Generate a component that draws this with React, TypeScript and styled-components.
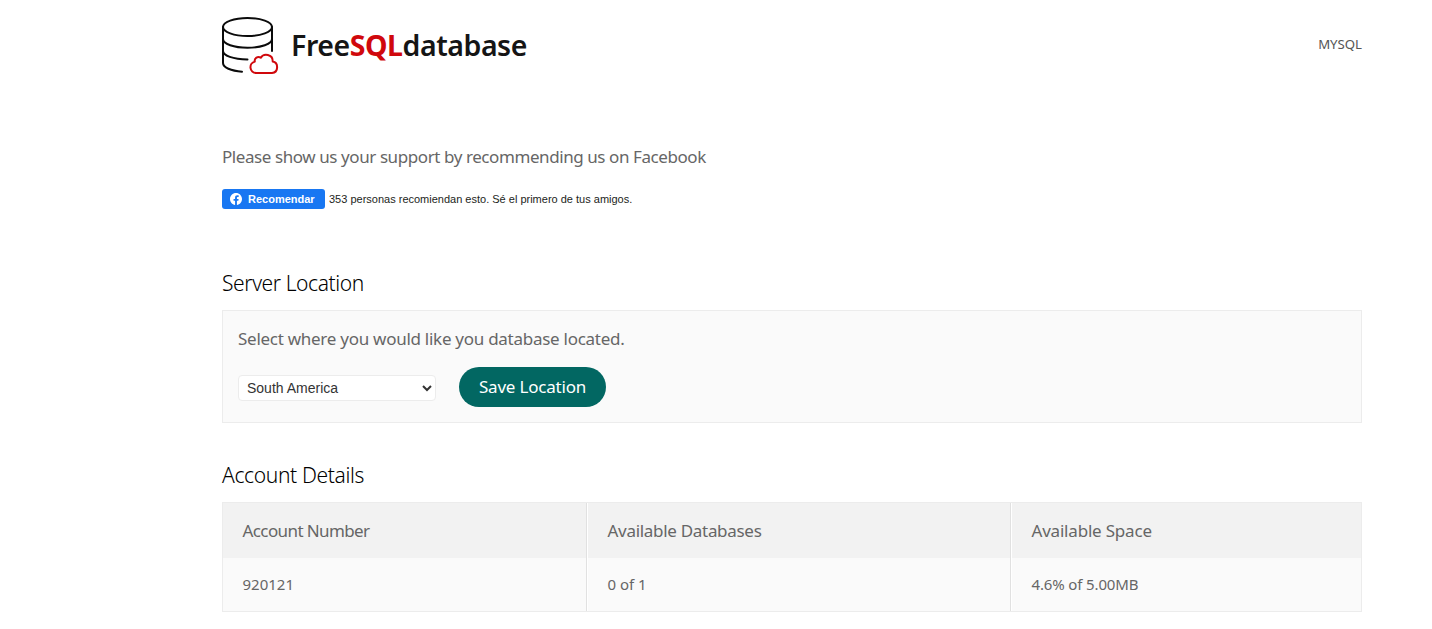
import React from 'react';
import styled, { createGlobalStyle } from 'styled-components';

const GlobalStyle = createGlobalStyle`
  * { box-sizing: border-box; }
  body {
    margin: 0;
    background: #fff;
    color: #666;
    font-family: 'Noto Sans', 'Open Sans', sans-serif;
    overflow: hidden;
  }
`;

const Page = styled.div`
  width: 1140px;
  margin-left: 222px;
`;

const Header = styled.header`
  display: flex;
  justify-content: space-between;
  align-items: center;
  height: 90px;
`;

const Brand = styled.div`
  display: flex;
  align-items: center;
  gap: 11px;
`;

const Wordmark = styled.span`
  color: #151515;
  font-size: 28.5px;
  font-weight: 600;
  line-height: 44px;
  letter-spacing: -0.45px;
  white-space: nowrap;
`;

const Accent = styled.span`
  color: #d0080c;
  font-weight: 700;
`;

const NavLink = styled.a`
  color: #555;
  font-size: 13.2px;
  line-height: 20px;
  margin-bottom: 2px;
  letter-spacing: 0;
  text-decoration: none;
  white-space: nowrap;
`;

const Lead = styled.p<{ $spacing: number }>`
  margin: 0;
  font-size: 17px;
  line-height: 28px;
  letter-spacing: ${(p) => p.$spacing}px;
  white-space: nowrap;
`;

const Support = styled.section`
  padding-top: 53px;
`;

const Recommend = styled.div`
  display: flex;
  align-items: center;
  gap: 4px;
  height: 20px;
  margin-top: 18px;
  font-family: 'Liberation Sans', Arial, sans-serif;
  font-size: 11px;
  color: #1c1e21;
`;

const RecommendButton = styled.button`
  display: flex;
  align-items: center;
  gap: 6px;
  width: 103px;
  height: 20px;
  padding: 0 0 0 8px;
  border: 0;
  border-radius: 3px;
  background: #1877f2;
  color: #fff;
  font: bold 11px/20px 'Liberation Sans', Arial, sans-serif;
`;

const Count = styled.span`
  white-space: nowrap;
`;

const Title = styled.h2<{ $spacing: number }>`
  margin: 0;
  color: #000;
  font-size: 21px;
  font-weight: 350;
  line-height: 30px;
  letter-spacing: ${(p) => p.$spacing}px;
`;

const Section = styled.section<{ $top: number }>`
  margin-top: ${(p) => p.$top}px;
`;

const Panel = styled.div`
  height: 113px;
  margin-top: 12px;
  padding: 14px 15px 0;
  border: 1px solid #ececec;
  background: #fafafa;
`;

const FormRow = styled.div`
  display: flex;
  align-items: center;
  margin-top: 14px;
  height: 40px;
`;

const Select = styled.select`
  width: 198px;
  height: 26px;
  margin: 2px 23px 0 0;
  padding: 0 1px 0 4px;
  border: 1px solid #ececec;
  border-radius: 4px;
  background: #fff;
  color: #333;
  font: 14px 'Liberation Sans', Arial, sans-serif;
`;

const SaveButton = styled.button`
  width: 147px;
  height: 40px;
  padding: 0;
  border: 0;
  border-radius: 20px;
  background: #026762;
  color: #fff;
  font: 17px/40px 'Noto Sans', sans-serif;
  letter-spacing: -0.2px;
  white-space: nowrap;
`;

const Table = styled.div`
  margin-top: 12px;
  border: 1px solid #ececec;
  background: #fafafa;
`;

const Row = styled.div<{ $head?: boolean }>`
  display: grid;
  grid-template-columns: 364px 424px 1fr;
  height: ${(p) => (p.$head ? 55 : 53)}px;
  background: ${(p) => (p.$head ? '#f2f2f2' : '#fafafa')};
  font-size: ${(p) => (p.$head ? 17 : 15)}px;
  line-height: ${(p) => (p.$head ? 56 : 53)}px;
`;

const Cell = styled.div<{ $spacing?: number }>`
  padding-left: 19.5px;
  letter-spacing: ${(p) => p.$spacing ?? 0}px;
  white-space: nowrap;
  border-left: 1px solid #fff;
  border-right: 1px solid #e1e1e1;

  &:first-child { border-left: 0; }
  &:last-child { border-right: 0; }
`;

const DatabaseMark = () => (
  <svg width="58" height="66" viewBox="0 0 58 66" aria-hidden="true">
    <g fill="none" stroke="#0b0b0b" strokeWidth="2" strokeLinecap="round">
      <ellipse cx="25.5" cy="15" rx="24.5" ry="9" />
      <path d="M1 15V51C1 55.5 9 59 20 59.7" />
      <path d="M50 15V39" />
      <path d="M1 27C1 32 12 35.7 25.5 35.7S50 32 50 27" />
      <path d="M1 39C1 43.5 11 47.3 25.5 47.5" />
    </g>
    <path
      d="M34 61A5.8 5.8 0 0 1 32.8 49.6C32 46 36 43.7 38.8 45.8C41.5 41 51 42 50.7 49.5C56.6 50.5 56.8 60.3 50 61Z"
      fill="none"
      stroke="#d0080c"
      strokeWidth="2"
      strokeLinejoin="round"
    />
  </svg>
);

const FacebookMark = () => (
  <svg width="12" height="12" viewBox="0 0 24 24" fill="#fff" aria-hidden="true">
    <path d="M24 12.07C24 5.41 18.63 0 12 0S0 5.4 0 12.07C0 18.1 4.39 23.1 10.13 24v-8.44H7.08v-3.49h3.04V9.41c0-3.02 1.8-4.7 4.54-4.7 1.31 0 2.68.24 2.68.24v2.97h-1.5c-1.5 0-1.96.93-1.96 1.89v2.26h3.32l-.53 3.5h-2.8V24C19.62 23.1 24 18.1 24 12.07" />
  </svg>
);

export default function App() {
  return (
    <>
      <GlobalStyle />
      <Page>
        <Header>
          <Brand>
            <DatabaseMark />
            <Wordmark>
              Free<Accent>SQL</Accent>database
            </Wordmark>
          </Brand>
          <NavLink>MYSQL</NavLink>
        </Header>
        <Support>
          <Lead $spacing={-0.42}>Please show us your support by recommending us on Facebook</Lead>
          <Recommend>
            <RecommendButton>
              <FacebookMark />
              Recomendar
            </RecommendButton>
            <Count>353 personas recomiendan esto. Sé el primero de tus amigos.</Count>
          </Recommend>
        </Support>
        <Section $top={59}>
          <Title $spacing={-0.4}>Server Location</Title>
          <Panel>
            <Lead $spacing={-0.27}>Select where you would like you database located.</Lead>
            <FormRow>
              <Select defaultValue="sa">
                <option value="sa">South America</option>
              </Select>
              <SaveButton>Save Location</SaveButton>
            </FormRow>
          </Panel>
        </Section>
        <Section $top={37}>
          <Title $spacing={-0.35}>Account Details</Title>
          <Table>
            <Row $head>
              <Cell $spacing={-0.6}>Account Number</Cell>
              <Cell $spacing={-0.3}>Available Databases</Cell>
              <Cell $spacing={-0.2}>Available Space</Cell>
            </Row>
            <Row>
              <Cell>920121</Cell>
              <Cell>0 of 1</Cell>
              <Cell $spacing={-0.14}>4.6% of 5.00MB</Cell>
            </Row>
          </Table>
        </Section>
      </Page>
    </>
  );
}
